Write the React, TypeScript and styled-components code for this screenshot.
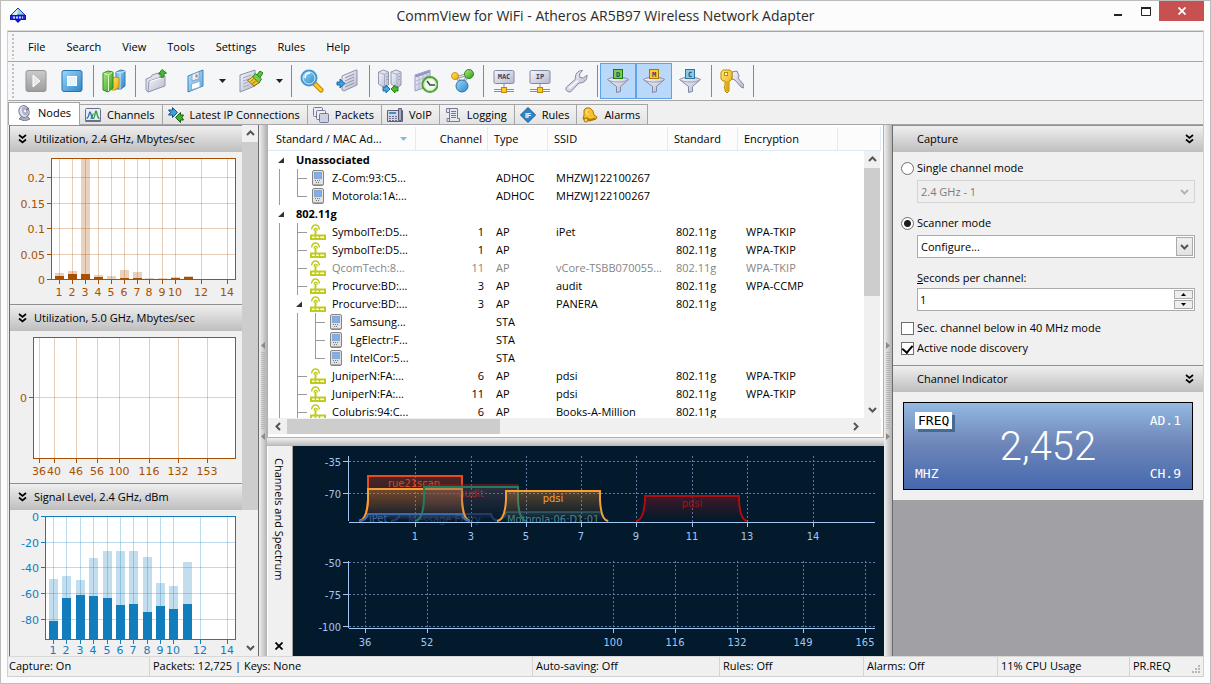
import React from "react";
import styled, { createGlobalStyle, css } from "styled-components";

const UI = `"Open Sans", "Noto Sans", sans-serif`;
const CHART = `"DejaVu Sans", sans-serif`;
const SPECTRUM = `"DejaVu Sans Condensed", "DejaVu Sans", sans-serif`;

const GlobalStyle = createGlobalStyle`
  * { box-sizing: border-box; }
  body { margin: 0; font: 11px/18px ${UI}; color: #000; }
  button, input, select { font: inherit; color: inherit; margin: 0; }
  button { border: 0; padding: 0; background: none; }
  svg { display: block; flex: none; }
`;

/* ---------- window frame ---------- */

const Window = styled.div`
  display: flex;
  flex-direction: column;
  height: 100vh;
  min-height: 640px;
  border: 1px solid #bdbdbd;
  background: #fcfcfc;
  padding: 0 6px 6px;
`;
const TitleBar = styled.header`
  display: grid;
  grid-template-columns: 120px 1fr 120px;
  height: 29px;
`;
const AppLogo = styled.div`
  padding: 6px 0 0 3px;
`;
const Title = styled.h1`
  margin: 0;
  font-size: 14px;
  font-weight: 400;
  line-height: 30px;
  text-align: center;
  color: #2b2b2b;
  white-space: nowrap;
`;
const WindowButtons = styled.div`
  display: flex;
  justify-content: flex-end;
  align-items: flex-start;
`;
const WindowButton = styled.button<{ $close?: boolean }>`
  display: grid;
  place-items: center;
  width: ${(p) => (p.$close ? 45 : 27)}px;
  height: 20px;
  background: ${(p) => (p.$close ? "#c75050" : "transparent")};
`;
const Client = styled.div`
  flex: 1;
  min-height: 0;
  display: flex;
  flex-direction: column;
  border: 1px solid #d0d0d0;
  border-top-color: #d9d9d9;
  background: #f0f0f0;
`;

/* ---------- menu and toolbar ---------- */

const Bar = styled.div<{ $height: number }>`
  display: flex;
  align-items: center;
  height: ${(p) => p.$height}px;
  border-top: 1px solid #a5a7ab;
  background: #f5f6f8;
`;
const Grip = styled.span`
  width: 2px;
  height: calc(100% - 4px);
  margin: 0 4px;
  background: repeating-linear-gradient(#c0c0c4 0 2px, transparent 2px 4px);
`;
const Menu = styled.nav`
  display: flex;
  gap: 21px;
  padding-left: 10px;
`;
const MenuItem = styled.button``;
const ToolGroup = styled.div`
  display: flex;
  align-items: center;
`;
const ToolButton = styled.button<{ $on?: boolean; $wide?: boolean }>`
  display: grid;
  place-items: center;
  width: ${(p) => (p.$wide ? 40 : 36)}px;
  height: 36px;
  border: 1px solid transparent;
  ${(p) =>
    p.$on &&
    css`
      background: #b9d8fa;
      border-color: #5fa2e6;
    `}
`;
const DropButton = styled.button`
  display: grid;
  place-items: center;
  width: 17px;
  height: 36px;
`;
const ToolSeparator = styled.span`
  width: 1px;
  height: 32px;
  margin: 0 2px 0 3px;
  background: #87898c;
`;

/* ---------- tabs ---------- */

const Tabs = styled.div`
  display: flex;
  align-items: flex-end;
  height: 25px;
  border-top: 1px solid #a5a7ab;
  border-bottom: 1px solid #a5a5aa;
  background: #f0f0f0;
`;
const Tab = styled.button<{ $active?: boolean }>`
  display: flex;
  align-items: center;
  gap: 6px;
  height: 20px;
  padding: 0 7px 0 5px;
  border: 1px solid #a5a5a5;
  border-bottom: 0;
  margin-right: -1px;
  background: linear-gradient(#f3f3f3, #e3e3e3);
  white-space: nowrap;
  ${(p) =>
    p.$active &&
    css`
      height: 23px;
      padding: 0 8px 2px 7px;
      background: #fff;
      margin-bottom: -1px;
    `}
`;

/* ---------- work area ---------- */

const Work = styled.main`
  flex: 1;
  min-height: 0;
  display: flex;
`;
const LeftDock = styled.aside`
  flex: none;
  display: flex;
  width: 250px;
  margin-left: 1px;
  border: solid #6b6b6b;
  border-width: 0 1px;
`;
const DockPanels = styled.div`
  flex: 1;
  display: flex;
  flex-direction: column;
  overflow: hidden;
`;
const PanelHead = styled.h2<{ $right?: boolean }>`
  flex: none;
  display: flex;
  align-items: center;
  gap: 7px;
  height: 27px;
  margin: 0;
  padding: ${(p) => (p.$right ? "0 9px 0 24px" : "0 8px 0")};
  justify-content: ${(p) => (p.$right ? "space-between" : "flex-start")};
  border-top: 1px solid #909090;
  background: linear-gradient(#efefef, #bebebe);
  font-size: 11px;
  font-weight: 400;
`;
const Collapse = styled.button`
  display: block;
`;
const ScrollV = styled.div`
  flex: none;
  display: flex;
  flex-direction: column;
  align-items: center;
  width: 16px;
  background: #f0f0f0;
`;
const ScrollTrack = styled.div`
  flex: 1;
  width: 100%;
`;
const ScrollThumb = styled.div<{ $share: number }>`
  height: ${(p) => p.$share}%;
  background: #cdcdcd;
`;
const ScrollButton = styled.button`
  display: grid;
  place-items: center;
  width: 17px;
  height: 17px;
`;
const SplitterV = styled.div`
  flex: none;
  display: grid;
  place-items: center;
  width: 8px;
  background: linear-gradient(90deg, #f0f0f0, #b2b2b2);
`;
const SplitterH = styled.div`
  flex: none;
  height: 8px;
  background: linear-gradient(#f0f0f0, #b8b8b8);
`;
const Center = styled.section`
  flex: 1;
  min-width: 0;
  display: flex;
  flex-direction: column;
`;

/* ---------- node list ---------- */

const NodeList = styled.div`
  position: relative;
  flex: 1;
  min-height: 0;
  display: flex;
  flex-direction: column;
  padding: 2px 2px 3px 0;
  border: 1px solid #b0b0b6;
  border-width: 0 1px 1px;
  background: #fff;
`;
const TableView = styled.div`
  flex: 1;
  min-height: 0;
  overflow: hidden;
`;
const Table = styled.table`
  width: 100%;
  table-layout: fixed;
  border-collapse: separate;
  border-spacing: 0;
  white-space: nowrap;
`;
const Th = styled.th<{ $w?: number; $end?: boolean }>`
  width: ${(p) => (p.$w ? p.$w + "px" : "auto")};
  height: 24px;
  padding: 1px 5px 0 6px;
  border-right: 1px solid #e2eaf5;
  border-bottom: 1px solid #dfe8f6;
  background: #fcfcfd;
  font-weight: 400;
  text-align: ${(p) => (p.$end ? "right" : "left")};
`;
const ThTree = styled.span`
  display: flex;
  align-items: center;
  justify-content: space-between;
  padding: 0 3px 0 2px;
`;
const Td = styled.td<{ $end?: boolean }>`
  height: 18px;
  padding: 0 4px 0 8px;
  overflow: hidden;
  text-align: ${(p) => (p.$end ? "right" : "left")};
`;
const TreeTd = styled.td`
  height: 18px;
  padding: 0 0 0 6px;
`;
const TreeCell = styled.div<{ $bold?: boolean }>`
  display: flex;
  align-items: center;
  height: 18px;
  font-weight: ${(p) => (p.$bold ? 700 : 400)};
`;
const TreeText = styled.span<{ $root?: boolean }>`
  margin-left: ${(p) => (p.$root ? 4 : 6)}px;
`;
const Row = styled.tr<{ $dim?: boolean }>`
  color: ${(p) => (p.$dim ? "#858585" : "#000")};
`;
const ListScrollV = styled(ScrollV)`
  position: absolute;
  top: 26px;
  right: 3px;
  bottom: 19px;
`;
const ScrollH = styled.div`
  flex: none;
  display: flex;
  align-items: center;
  height: 16px;
  padding: 0 17px 0 2px;
  background: #f0f0f0;
`;
const ScrollHTrack = styled.div`
  flex: 1;
  height: 15px;
`;
const ScrollHThumb = styled.div`
  width: 38%;
  height: 100%;
  background: #cdcdcd;
`;

/* ---------- spectrum ---------- */

const SpectrumPane = styled.div`
  flex: none;
  display: flex;
  height: 210px;
  background: #021a2b;
`;
const SpectrumSide = styled.div`
  flex: none;
  display: flex;
  flex-direction: column;
  align-items: center;
  justify-content: space-between;
  width: 26px;
  padding: 12px 2px 6px 0;
  border-right: 1px solid #a0a0a0;
  border-left: 1px solid #fff;
  background: #f0f0f0;
`;
const SideTitle = styled.span`
  writing-mode: vertical-rl;
  line-height: 16px;
`;

/* ---------- capture panel ---------- */

const RightDock = styled.aside`
  flex: none;
  display: flex;
  flex-direction: column;
  width: 311px;
  border-left: 1px solid #6b6b6b;
  background: #a0a0a5;
`;
const CaptureForm = styled.form`
  flex: none;
  display: flex;
  flex-direction: column;
  padding: 6px 8px 7px;
  background: #f0f0f0;
`;
const Choice = styled.label`
  display: flex;
  align-items: center;
  gap: 3px;
  height: 20px;
`;
const Radio = styled.input`
  appearance: none;
  width: 13px;
  height: 13px;
  border: 1px solid #6e6e6e;
  border-radius: 50%;
  background: #fff;
  &:checked {
    background: radial-gradient(circle, #1e1e1e 0 3px, #fff 4px);
  }
`;
const Check = styled.input`
  appearance: none;
  display: grid;
  place-items: center;
  width: 13px;
  height: 13px;
  border: 1px solid #6e6e6e;
  background: #fff;
  &:checked::before {
    content: "";
    width: 5px;
    height: 8px;
    margin-bottom: 2px;
    border: solid #000;
    border-width: 0 2px 2px 0;
    transform: rotate(40deg);
  }
`;
const Field = styled.div`
  display: grid;
  margin: 2px 0 0 16px;
`;
const Select = styled.select`
  grid-area: 1 / 1;
  appearance: none;
  height: 23px;
  padding: 0 3px;
  border: 1px solid #ababab;
  border-radius: 0;
  background: #fff;
  &:disabled {
    border-color: #d4d4d4;
    background: #efefef;
    color: #7b7b7b;
    opacity: 1;
  }
`;
const SelectArrow = styled.span<{ $box?: boolean }>`
  grid-area: 1 / 1;
  justify-self: end;
  align-self: center;
  display: grid;
  place-items: center;
  width: 17px;
  height: 19px;
  margin-right: 2px;
  pointer-events: none;
  ${(p) =>
    p.$box &&
    css`
      border: 1px solid #ababab;
      background: linear-gradient(#f0f0f0, #e2e2e2);
    `}
`;
const FieldLabel = styled.label`
  margin: 11px 0 0 16px;
`;
const Spin = styled.div`
  display: flex;
  height: 23px;
  margin: 1px 0 7px 16px;
  padding: 1px;
  border: 1px solid #ababab;
  background: #fff;
`;
const SpinInput = styled.input`
  flex: 1;
  min-width: 0;
  border: 0;
  padding: 0 1px;
  background: none;
`;
const SpinButtons = styled.div`
  display: grid;
  grid-template-rows: 1fr 1fr;
  gap: 1px;
  width: 19px;
`;
const SpinButton = styled.button`
  display: grid;
  place-items: center;
  border: 1px solid #ababab;
  background: #eee;
`;
const Gap = styled.div`
  height: 10px;
`;
const IndicatorWrap = styled.div`
  flex: none;
  padding: 10px;
  background: #f0f0f0;
`;
const Indicator = styled.div`
  display: grid;
  grid-template-columns: 60px 1fr 60px;
  height: 88px;
  padding: 9px 11px 7px;
  border: 1px solid #000;
  background: linear-gradient(#93b9e2, #7088ba 45%, #4568ad);
  font: 13px/17px "DejaVu Sans Mono", monospace;
  color: #fff;
`;
const IndicatorSide = styled.div<{ $end?: boolean }>`
  display: flex;
  flex-direction: column;
  justify-content: space-between;
  align-items: ${(p) => (p.$end ? "flex-end" : "flex-start")};
`;
const FreqTag = styled.span`
  padding: 0 3px;
  background: #fff;
  color: #000;
  box-shadow: 3px 3px 0 #436b94;
`;
const Frequency = styled.output`
  align-self: center;
  text-align: center;
  font: 300 40px/44px Roboto, sans-serif;
`;

/* ---------- status bar ---------- */

const StatusBar = styled.footer`
  flex: none;
  display: grid;
  grid-template-columns: 141px 1fr 187px 144px 134px 132px 74px;
  height: 20px;
  border-top: 1px solid #d8d8d8;
`;
const StatusItem = styled.span`
  display: flex;
  justify-content: space-between;
  padding: 0 2px 0 3px;
  border-left: 1px solid #d4d4d4;
  white-space: nowrap;
  &:first-child {
    border-left: 0;
    padding-left: 1px;
  }
`;

/* ---------- toolbar pictures ---------- */

const Svg24 = ({ children }: { children: React.ReactNode }) => (
  <svg width="24" height="24" viewBox="0 0 24 24" fill="none" aria-hidden>
    <defs>
      <linearGradient id="steel" x1="0" y1="0" x2="1" y2="1">
        <stop offset="0" stopColor="#f6f7fb" />
        <stop offset="1" stopColor="#b4b7cc" />
      </linearGradient>
      <linearGradient id="azure" x1="0" y1="0" x2="1" y2="1">
        <stop offset="0" stopColor="#9bd9fb" />
        <stop offset="1" stopColor="#2c86c9" />
      </linearGradient>
      <linearGradient id="sky" x1="0" y1="0" x2="1" y2="1">
        <stop offset="0" stopColor="#b5e2fb" />
        <stop offset="1" stopColor="#5fa9e0" />
      </linearGradient>
      <linearGradient id="leaf" x1="0" y1="0" x2="1" y2="1">
        <stop offset="0" stopColor="#b4ec80" />
        <stop offset="1" stopColor="#2f9a1d" />
      </linearGradient>
      <linearGradient id="gold" x1="0" y1="0" x2="1" y2="1">
        <stop offset="0" stopColor="#ffe873" />
        <stop offset="1" stopColor="#eaa800" />
      </linearGradient>
      <linearGradient id="stone" x1="0" y1="0" x2="0" y2="1">
        <stop offset="0" stopColor="#cbcbcb" />
        <stop offset="1" stopColor="#9e9e9e" />
      </linearGradient>
    </defs>
    {children}
  </svg>
);

const PlayIcon = () => (
  <Svg24>
    <rect x="2" y="1.500" width="20" height="21" rx="2" fill="url(#stone)" stroke="#949494" />
    <path d="M9 6v12l7-6z" fill="#e8e8e8" stroke="#fff" />
  </Svg24>
);
const StopIcon = () => (
  <Svg24>
    <rect x="2" y="1.500" width="20" height="21" rx="2" fill="url(#azure)" stroke="#2771ac" />
    <rect x="7.500" y="7.500" width="9" height="9" fill="#e4f4fd" stroke="#fff" />
  </Svg24>
);
const BooksIcon = () => (
  <Svg24>
    <path d="M14 3l5-2 4 1v15l-4 3h-5z" fill="url(#azure)" stroke="#3a79ad" />
    <path d="M14 3l4 1 5-2M18 4v16" stroke="#cfeafb" />
    <path d="M10 9l3-1 4 1v9l-4 3h-3z" fill="url(#gold)" stroke="#c79512" />
    <path d="M1 4l5-2 5 1v16l-5 4-5-2z" fill="url(#leaf)" stroke="#2f8a1c" />
    <path d="M1.500 4l5 2 4-3M6.500 6v16" stroke="#dcf7c4" />
  </Svg24>
);
const OpenIcon = () => (
  <Svg24>
    <path d="M2 10l5-2 1-2 6-2 2 1v13L4 23l-2-2z" fill="#dfe1ea" stroke="#9296b0" />
    <path d="M4 23l1-11 16-5v10z" fill="url(#steel)" stroke="#9296b0" />
    <path d="M5.500 12.500l15-4.500" stroke="#fff" />
    <path d="M14.500 5L18 .5 22.500 4l-2.500.5V8l-3 .5V5z" fill="#4dbb2d" stroke="#23821a" />
  </Svg24>
);
const SaveIcon = () => (
  <Svg24>
    <path d="M6 7l15-6v16L6 23z" fill="url(#sky)" stroke="#3f83bb" />
    <path d="M10 5.500l7-2.800v7L10 12z" fill="#eef1f8" stroke="#8da6c4" />
    <path d="M14.500 5.500v3" stroke="#8289a6" strokeWidth="2" />
    <path d="M9.500 15l8.500-3v6l-8.500 3z" fill="#fdfdff" stroke="#7fb2dc" />
  </Svg24>
);
const BrushIcon = () => (
  <Svg24>
    <path d="M1 6l15-5v16L1 23z" fill="url(#steel)" stroke="#8e92ad" />
    <path d="M4 9l8-3M4 12l6-2M4 15l5-2M4 18l6-2" stroke="#a3a7bd" />
    <path d="M17 7l4-5 3 2-4 6z" fill="#5cc438" stroke="#23821a" />
    <path d="M13.500 8l3-3.500 6 5.500-2.500 4z" fill="#6ed047" stroke="#23821a" />
    <path d="M13.500 8l6.500 6-5 3-6.500-5.500z" fill="url(#gold)" stroke="#8d7410" />
    <path d="M11.500 12.500l3-2.500M13.500 14.500l3-2.500" stroke="#8d7410" />
  </Svg24>
);
const FindIcon = () => (
  <Svg24>
    <path d="M15 15l6 6" stroke="#b78410" strokeWidth="5" strokeLinecap="round" />
    <path d="M15 15l6 6" stroke="#ffc928" strokeWidth="3" strokeLinecap="round" />
    <circle cx="9" cy="9" r="7.500" fill="url(#azure)" stroke="#4b96c9" strokeWidth="2" />
    <circle cx="9" cy="9" r="6" stroke="#c7ecfd" />
    <path d="M5 9c0-3 2-5 5-5" stroke="#fff" strokeWidth="1.500" />
  </Svg24>
);
const GotoIcon = () => (
  <Svg24>
    <path d="M6 7l14-6h1v15L8 22l-2-1z" fill="url(#steel)" stroke="#8e92ad" />
    <path d="M9 9l9-4M9 12l9-4M9 15l9-4M9 18l9-4" stroke="#8f94ae" />
    <path d="M1 13h3v-3l5 4.500L4 19v-3H1z" fill="#3a9be0" stroke="#1c6aa8" />
  </Svg24>
);
const ServersIcon = () => (
  <Svg24>
    <path d="M0.500 3l5-2 5 2v13l-4 3-6-4z" fill="url(#steel)" stroke="#9296b0" />
    <path d="M13 3l5-2 5 2v13l-4 3-6-4z" fill="url(#steel)" stroke="#9296b0" />
    <path d="M1 3.500l5.500 2 4-2M6.500 5.500v13M13.500 3.500l5.500 2 4-2M19 5.500v13" stroke="#a6aac0" />
    <path d="M8 8l2-1M8 11l2-1M20 8l2-1M20 11l2-1" stroke="#9a9eb6" />
    <path d="M5 18h3v-2l4 4-4 4v-2H5z" fill="#44a6e6" stroke="#1c6aa8" />
    <path d="M20 18h-3v-2l-4 4 4 4v-2h3z" fill="#4dbb2d" stroke="#23821a" />
  </Svg24>
);
const SchedulerIcon = () => (
  <Svg24>
    <path d="M1 6l15-5v16L1 22z" fill="url(#steel)" stroke="#9a9dc4" />
    <path d="M1.500 7.500l14-5" stroke="#8f93c0" strokeWidth="2" />
    <path d="M5 8v12M9 6v13M13 5v12M2 12l13-5M2 16l13-5" stroke="#b3b6d2" />
    <circle cx="16" cy="15.500" r="7.500" fill="#f2fbef" stroke="#4ea13c" strokeWidth="2" />
    <circle cx="16" cy="15.500" r="6" stroke="#b9e3ac" />
    <path d="M13 12l3 4h5" stroke="#3c4a3c" strokeWidth="1.500" />
  </Svg24>
);
const TopologyIcon = () => (
  <Svg24>
    <path d="M6 7l6 9M18 6l-6 10M8 8l8-2" stroke="#9a9eb0" strokeWidth="3" />
    <path d="M6 7l6 9M18 6l-6 10M8 8l8-2" stroke="#e9ebf2" />
    <circle cx="5" cy="7" r="3.500" fill="url(#gold)" stroke="#c79512" />
    <circle cx="19" cy="5" r="4.500" fill="url(#leaf)" stroke="#2f8a1c" />
    <circle cx="12" cy="17" r="6" fill="url(#azure)" stroke="#2f72a8" />
  </Svg24>
);
const Label = styled.text`
  font: 700 7px "DejaVu Sans Mono", monospace;
  text-anchor: middle;
  fill: #3c4568;
`;
const NetTagIcon = ({ tag }: { tag: string }) => (
  <Svg24>
    <rect x="2" y="1.500" width="20" height="13" rx="1.500" fill="url(#steel)" stroke="#8488a4" />
    <Label x="12" y="10">{tag}</Label>
    <path d="M12 15v5M2 20.500h20M2 22.500h20" stroke="#8d8f9c" />
    <rect x="9.500" y="18.500" width="5" height="5" fill="#ffc91f" stroke="#b78410" />
  </Svg24>
);
const WrenchIcon = () => (
  <Svg24>
    <path
      d="M2.500 18L11.500 10c-.8-4.500 2-8.500 7-8.500L15.500 5l.5 3.500 3.500.5 3.500-3c.6 5-3.500 8.500-8 8L7 22.500c-3 1.500-6.500-1.500-4.500-4.500z"
      fill="url(#steel)"
      stroke="#8488a4"
    />
    <path d="M5 19.500l9-8" stroke="#fff" strokeWidth="1.500" />
  </Svg24>
);
const FunnelIcon = ({ tag, fill, edge }: { tag: string; fill: string; edge: string }) => (
  <Svg24>
    <path d="M1.500 10.500c4-3 17-3 21 0l-8 7v5l-4 1v-6z" fill="url(#steel)" stroke="#8488a4" />
    <path d="M3 11.500c5 2 13 2 18 0" stroke="#9da1b8" />
    <rect x="7.500" y=".5" width="9" height="9" fill={fill} stroke={edge} />
    <Label x="12" y="8">{tag}</Label>
  </Svg24>
);
const KeysIcon = () => (
  <Svg24>
    <path d="M12 3l5-1 2 5-1 2 6 7v3l-3-1-6-7-3-1z" fill="url(#steel)" stroke="#8488a4" />
    <path d="M1 3l2-2h7l2 2v7l-2 2H9v10l-2 2-2-2v-2l-1-2 1-1v-5H3l-2-2z" fill="url(#gold)" stroke="#b98c0c" />
    <rect x="4.500" y="3.500" width="3" height="3" fill="#fff" stroke="#b98c0c" />
    <path d="M7 12v10" stroke="#c79512" />
  </Svg24>
);
const DropArrow = () => (
  <svg width="7" height="4" viewBox="0 0 7 4" aria-hidden>
    <path d="M0 0h7L3.500 4z" fill="#222" />
  </svg>
);

/* ---------- tab pictures ---------- */

const Svg16 = ({ children }: { children: React.ReactNode }) => (
  <svg width="16" height="16" viewBox="0 0 16 16" fill="none" aria-hidden>
    {children}
  </svg>
);
const NodesIcon = () => (
  <Svg16>
    <path d="M3 14l3-3h5l3 3-5 2z" fill="#a9adc2" stroke="#7a7e99" />
    <ellipse cx="8" cy="6.500" rx="5" ry="6" transform="rotate(-20 8 6.500)" fill="#dfe1ec" stroke="#7a7e99" />
    <ellipse cx="9" cy="6" rx="3" ry="4.500" transform="rotate(-20 9 6)" fill="#aeb2c8" />
    <path d="M9 6l4-3" stroke="#50546c" />
    <circle cx="9" cy="6" r="1.200" fill="#f6f7fb" />
  </Svg16>
);
const ChannelsIcon = () => (
  <Svg16>
    <rect x=".5" y="1.500" width="15" height="13" rx="1" fill="#e6eef5" stroke="#6a6d8c" />
    <path d="M1.500 11.500C4 11.500 4 5 5 5s1.500 6.500 3 6.500" stroke="#2f66c0" strokeWidth="1.300" />
    <path d="M5.500 11.500C7 11.500 7.500 7 8.500 7M8 11.500C10 11.500 10 4 11 4s1 7.500 3.500 7.500" stroke="#2a9a3a" strokeWidth="1.300" />
    <path d="M.5 14h15" stroke="#6a6d8c" strokeWidth="2" />
  </Svg16>
);
const ConnectionsIcon = () => (
  <Svg16>
    <path d="M.5 3h4V.500l5 5-5 5V8h-4l2-2.500z" fill="#3e9fdf" stroke="#1d4f7d" />
    <path d="M15.500 8h-3V5.500l-5 5 5 5V13h3l-1.500-2.500z" fill="#3fb030" stroke="#1b6114" />
  </Svg16>
);
const PacketsIcon = () => (
  <Svg16>
    <rect x=".5" y=".5" width="9" height="9" rx="1" fill="#eceef5" stroke="#74789a" />
    <rect x="3.500" y="3.500" width="9" height="9" rx="1" fill="#eceef5" stroke="#74789a" />
    <rect x="6.500" y="6.500" width="9" height="9" rx="1" fill="#cdd0df" stroke="#74789a" />
  </Svg16>
);
const VoipIcon = () => (
  <Svg16>
    <path d="M.5 3.500h15v11H.5z" fill="#d6d8e2" stroke="#5c607c" />
    <path d="M2 5h7v2H2z" fill="#3d8fd0" />
    <path d="M2 9.500h8M2 11.500h8M2 13.500h8" stroke="#6c708c" strokeDasharray="2 1" />
    <path d="M11.500 1.500h3v12h-3z" fill="#a7aabb" stroke="#5c607c" />
  </Svg16>
);
const LoggingIcon = () => (
  <Svg16>
    <path d="M1.500 1.500h11v10h2v3h-10v-9h-3z" fill="#e6e8f0" stroke="#74789a" />
    <path d="M4.500 1.500v10M6 4.500h5M6 6.500h5M6 8.500h5M6 10.500h5M4 11.500H2v3h3" stroke="#74789a" />
  </Svg16>
);
const RulesText = styled.text`
  font: 700 7px "Liberation Sans", sans-serif;
  text-anchor: middle;
  fill: #fff;
`;
const RulesIcon = () => (
  <Svg16>
    <path d="M8 .5L15.500 8 8 15.500.5 8z" fill="#2a86cb" stroke="#165486" />
    <RulesText x="8" y="11">IF</RulesText>
  </Svg16>
);
const AlarmsIcon = () => (
  <Svg16>
    <path d="M2 3l2-2 4 0 3 3 1 4 3 2-1 2-4 1-5-2-4 1 1-4z" fill="#f6c12a" stroke="#a97808" />
    <path d="M4 3.500l3-1M4 6l3 2M4 4v3" stroke="#fdeb9c" />
    <path d="M1.500 11.500l6 2 6-2" stroke="#a97808" strokeWidth="2" />
    <circle cx="4" cy="13" r="2" fill="#f9d455" stroke="#a97808" />
  </Svg16>
);
const LogoIcon = () => (
  <Svg16>
    <path d="M8 1l7 7H1z" fill="#8fe0b0" stroke="#2a2fd0" />
    <path d="M8 2L2 8h5z" fill="#e5edff" />
    <rect x=".5" y="8.500" width="15" height="4" fill="#2027d8" stroke="#1015c0" />
    <path d="M3 10.500h10" stroke="#c8d4ff" strokeWidth="2" strokeDasharray="2 1" />
    <path d="M5 13h6l-3 3z" fill="#1015c0" />
  </Svg16>
);

/* ---------- tree pictures ---------- */

type Guide = "line" | "tee" | "elbow" | "open";
const GuideCell = ({ kind }: { kind: Guide }) => (
  <svg width="18" height="18" viewBox="0 0 18 18" shapeRendering={kind === "open" ? "auto" : "crispEdges"} aria-hidden>
    {kind === "open" && <path d="M4 12h6V6.500z" fill="#333" />}
    {(kind === "line" || kind === "tee") && <rect x="5" width="1" height="18" fill="#9a9a9a" />}
    {kind === "elbow" && <rect x="5" width="1" height="9" fill="#9a9a9a" />}
    {(kind === "tee" || kind === "elbow") && <rect x="5" y="9" width="10" height="1" fill="#9a9a9a" />}
  </svg>
);
const RouterIcon = () => (
  <Svg16>
    <g stroke="#bfcc1e">
      <path d="M1.500 5.500c1-6 7-6 8 0" strokeWidth="1.500" />
      <path d="M4 6.500c.6-3 3-3 3.500 0" strokeWidth="1.500" />
      <path d="M5.500 6v6" strokeWidth="2" />
      <rect x="1" y="11.500" width="14" height="3.500" strokeWidth="2" />
      <path d="M5.500 12v3M9.500 12v3" strokeWidth="1.500" />
    </g>
  </Svg16>
);
const StationIcon = () => (
  <Svg16>
    <rect x="2.500" y=".5" width="11" height="15" rx="1.500" fill="#e2e2e2" stroke="#858585" />
    <rect x="4.500" y="2.500" width="7" height="6" fill="#7db0ee" stroke="#8ba6c8" />
    <path d="M5 10.500h6M6 12.500h4" stroke="#777" strokeDasharray="1 1" />
    <path d="M3 14.500h10" stroke="#aaa" />
  </Svg16>
);
const Chevrons = () => (
  <svg width="9" height="10" viewBox="0 0 9 10" fill="none" stroke="#000" strokeWidth="1.700" aria-hidden>
    <path d="M1 1l3.500 3L8 1M1 5.500l3.500 3 3.500-3" />
  </svg>
);
const Arrow = ({ turn, color = "#555" }: { turn: number; color?: string }) => (
  <svg width="9" height="9" viewBox="0 0 9 9" fill="none" stroke={color} strokeWidth="2" aria-hidden>
    <path d="M1 6l3.500-3.500L8 6" transform={`rotate(${turn} 4.500 4.500)`} />
  </svg>
);
const SplitterHandle = ({ left }: { left?: boolean }) => (
  <svg width="6" height="98" viewBox="0 0 6 98" fill="#8a8a8a" aria-hidden>
    <path d={left ? "M5 0v7L1 3.500z" : "M1 0v7l4-3.500z"} />
    <path d={left ? "M5 91v7l-4-3.500z" : "M1 91v7l4-3.500z"} />
    <path d="M2 10v78M4 10v78" stroke="#999" strokeDasharray="1 1" />
  </svg>
);

/* ---------- bar charts ---------- */

type ChartBar = [x: number, light: number, dark: number];
type Mark = [pos: number, label: string, grid?: boolean];
type ChartSpec = {
  top: number;
  box: [number, number, number, number];
  color: string;
  xs: Mark[];
  ys: Mark[];
  bars: ChartBar[];
  labelY: number;
};
const ChartText = styled.text`
  font: 11px ${CHART};
`;
const ChartArea = styled.div<{ $grow?: boolean }>`
  flex: ${(p) => (p.$grow ? "1 1 0" : "none")};
  min-height: 0;
  overflow: hidden;
  background: #f0f0f0;
`;
const BarChart = ({ spec }: { spec: ChartSpec }) => {
  const [l, t, r, b] = spec.box;
  const c = spec.color;
  return (
    <svg width="232" height="152" viewBox={`10 ${spec.top} 232 152`} shapeRendering="crispEdges" role="img">
      <rect x={l} y={t} width={r - l + 1} height={b - t + 1} fill="#fff" />
      {spec.ys.map(([y, s]) => (
        <g key={y} fill={c}>
          {y !== t && y !== b && <rect x={l} y={y} width={r - l} height="1" opacity="0.280" />}
          <rect x={l - 4} y={y} width="4" height="1" />
          <ChartText x={l - 6} y={y + 5} textAnchor="end">{s}</ChartText>
        </g>
      ))}
      {spec.xs.map(([x, s, grid = true]) => (
        <g key={x} fill={c}>
          {grid && <rect x={x} y={t} width="1" height={b - t} opacity="0.280" />}
          <rect x={x} y={b} width="1" height="5" />
          <ChartText x={x} y={spec.labelY} textAnchor="middle">{s}</ChartText>
        </g>
      ))}
      {spec.bars.map(([x, light, dark]) => (
        <g key={x} fill={c}>
          <rect x={x} y={light} width="9" height={b - light} opacity="0.260" />
          <rect x={x} y={dark} width="9" height={b - dark} />
        </g>
      ))}
      <g fill={c}>
        <rect x={l} y={t} width={r - l + 1} height="1" />
        <rect x={l} y={b} width={r - l + 1} height="1" />
        <rect x={l} y={t} width="1" height={b - t} />
        <rect x={r} y={t} width="1" height={b - t} />
      </g>
    </svg>
  );
};

const util24: ChartSpec = {
  top: 152,
  box: [51, 158, 235, 279],
  color: "#a85000",
  labelY: 296,
  ys: [[177, "0.2"], [203, "0.15"], [228, "0.1"], [254, "0.05"], [279, "0"]],
  xs: [[59, "1"], [72, "2"], [85, "3"], [98, "4"], [111, "5"], [124, "6"], [137, "7"], [149, "8"], [162, "9"], [175, "10"], [201, "12"], [227, "14"]],
  bars: [[55, 273, 276], [68, 271, 274], [81, 159, 274], [94, 275, 277], [107, 276, 279], [120, 270, 278], [133, 272, 278], [145, 278, 279], [158, 278, 279], [171, 277, 278], [184, 276, 277]],
};
const util50: ChartSpec = {
  top: 331,
  box: [33, 337, 235, 458],
  color: "#a85000",
  labelY: 475,
  ys: [[397, "0"]],
  xs: [[39, "36"], [54, "40"], [76, "46"], [97, "56"], [119, "100"], [149, "116"], [178, "132"], [207, "153"]],
  bars: [],
};
const signal24: ChartSpec = {
  top: 510,
  box: [45, 516, 235, 639],
  color: "#127dbd",
  labelY: 654,
  ys: [[516, "0"], [542, "-20"], [567, "-40"], [593, "-60"], [619, "-80"]],
  xs: [[53, "1"], [66, "2"], [80, "3"], [93, "4"], [107, "5"], [120, "6"], [133, "7"], [147, "8"], [160, "9"], [173, "10"], [200, "12"], [227, "14"]],
  bars: [[49, 579, 621], [62, 576, 598], [76, 580, 595], [89, 558, 596], [103, 551, 598], [116, 551, 605], [129, 551, 604], [143, 557, 612], [156, 583, 606], [169, 586, 609], [183, 562, 604]],
};

/* ---------- spectrum drawing ---------- */

const SpecText = styled.text`
  font: 11px ${SPECTRUM};
`;
type Hump = { l: number; r: number; top: number; color: string; fill?: string; w?: number };
const humps: Hump[] = [
  { l: 400, r: 491, top: 514, color: "#22386a", fill: "#1d3560" },
  { l: 506, r: 601, top: 512, color: "#2c6f80", fill: "#23506a", w: 1 },
  { l: 368, r: 462, top: 476, color: "#f04818", fill: "#c03a20" },
  { l: 368, r: 462, top: 489, color: "#f5a035", fill: "#d08030" },
  { l: 424, r: 518, top: 485, color: "#a81518", w: 1 },
  { l: 424, r: 518, top: 487, color: "#1f7d62", fill: "#70505a" },
  { l: 506, r: 600, top: 491, color: "#f5a035", fill: "#d08030" },
  { l: 368, r: 462, top: 514, color: "#3c68ae", fill: "#3a68a8" },
  { l: 645, r: 739, top: 496, color: "#b00c10", fill: "#a01525" },
];
const humpPath = (h: Hump) => {
  const knee = Math.max(h.top, 500);
  return `M${h.l - 9} 521Q${h.l - 1} 520 ${h.l} ${knee}V${h.top}H${h.r}V${knee}Q${h.r + 1} 520 ${h.r + 8} 521`;
};
const channels24 = [[415, "1"], [471, "3"], [526, "5"], [581, "7"], [636, "9"], [692, "11"], [747, "13"], [813, "14"]] as const;
const channels50 = [[365, "36"], [427, "52"], [613, "100"], [675, "116"], [737, "132"], [803, "149"], [865, "165"]] as const;

const Spectrum = () => (
  <svg width="590" height="210" viewBox="293 446 590 210" fill="none" role="img">
    <defs>
      {humps.map((h, i) => (
        <linearGradient key={i} id={`hump${i}`} gradientUnits="userSpaceOnUse" x1="0" x2="0" y1={h.top} y2="520">
          <stop offset="0" stopColor={h.fill ?? h.color} stopOpacity={h.fill ? 0.4 : 0} />
          <stop offset="0.700" stopColor={h.fill ?? h.color} stopOpacity={h.fill ? 0.12 : 0} />
          <stop offset="1" stopColor={h.fill ?? h.color} stopOpacity="0" />
        </linearGradient>
      ))}
    </defs>
    <g stroke="#5c7aa8" strokeDasharray="2 2" shapeRendering="crispEdges">
      {[461, 493, 562, 594, 626].map((y) => (
        <path key={y} d={`M349 ${y + 0.5}H875`} />
      ))}
      {channels24.map(([x]) => (
        <path key={x} d={`M${x + 0.5} 456V522`} />
      ))}
      {channels50.map(([x]) => (
        <path key={x} d={`M${x + 0.5} 561V628`} />
      ))}
    </g>
    <g fill="#3b69a6">
      <SpecText x="369" y="522">iPet</SpecText>
      <SpecText x="408" y="523" fill="#25406f">Message Entry</SpecText>
      <SpecText x="507" y="523" fill="#4c8c96">Motorola:06:D1:01</SpecText>
    </g>
    <g textAnchor="middle">
      <SpecText x="414" y="487" fill="#ee4a20">rue21scan</SpecText>
      <SpecText x="471" y="497" fill="#b01c22">audit</SpecText>
    </g>
    {humps.map((h, i) => (
      <path key={i} d={humpPath(h)} fill={`url(#hump${i})`} stroke={h.color} strokeWidth={h.w ?? 2} />
    ))}
    <g textAnchor="middle">
      <SpecText x="553" y="502" fill="#f5a035">pdsi</SpecText>
      <SpecText x="692" y="507" fill="#a80f18">pdsi</SpecText>
    </g>
    <g fill="#a4c6f2" shapeRendering="crispEdges">
      <rect x="348" y="456" width="1" height="65" />
      <rect x="349" y="522" width="526" height="1" />
      <rect x="348" y="561" width="1" height="67" />
      <rect x="349" y="628" width="526" height="1" />
      {([[461, "-35"], [493, "-70"], [562, "-50"], [594, "-75"], [626, "-100"]] as const).map(([y, s]) => (
        <g key={y}>
          <rect x="343" y={y} width="5" height="1" />
          <SpecText x="341" y={y + 5} textAnchor="end">{s}</SpecText>
        </g>
      ))}
      {channels24.map(([x, s]) => (
        <g key={x}>
          <rect x={x} y="522" width="1" height="5" />
          <SpecText x={x} y="540" textAnchor="middle">{s}</SpecText>
        </g>
      ))}
      {channels50.map(([x, s]) => (
        <g key={x}>
          <rect x={x} y="628" width="1" height="5" />
          <SpecText x={x} y="646" textAnchor="middle">{s}</SpecText>
        </g>
      ))}
    </g>
  </svg>
);

/* ---------- data ---------- */

type NodeRow = {
  name: string;
  guides: Guide[];
  icon?: "ap" | "sta";
  cells?: [channel: string, type: string, ssid: string, standard: string, encryption: string];
  dim?: boolean;
};
const rows: NodeRow[] = [
  { name: "Unassociated", guides: ["open"] },
  { name: "Z-Com:93:C5...", guides: ["line", "tee"], icon: "sta", cells: ["", "ADHOC", "MHZWJ122100267", "", ""] },
  { name: "Motorola:1A:...", guides: ["line", "elbow"], icon: "sta", cells: ["", "ADHOC", "MHZWJ122100267", "", ""] },
  { name: "802.11g", guides: ["open"] },
  { name: "SymbolTe:D5...", guides: ["line", "tee"], icon: "ap", cells: ["1", "AP", "iPet", "802.11g", "WPA-TKIP"] },
  { name: "SymbolTe:D5...", guides: ["line", "tee"], icon: "ap", cells: ["1", "AP", "", "802.11g", "WPA-TKIP"] },
  { name: "QcomTech:8...", guides: ["line", "tee"], icon: "ap", cells: ["11", "AP", "vCore-TSBB070055...", "802.11g", "WPA-TKIP"], dim: true },
  { name: "Procurve:BD:...", guides: ["line", "tee"], icon: "ap", cells: ["3", "AP", "audit", "802.11g", "WPA-CCMP"] },
  { name: "Procurve:BD:...", guides: ["line", "open"], icon: "ap", cells: ["3", "AP", "PANERA", "802.11g", ""] },
  { name: "Samsung...", guides: ["line", "line", "tee"], icon: "sta", cells: ["", "STA", "", "", ""] },
  { name: "LgElectr:F...", guides: ["line", "line", "tee"], icon: "sta", cells: ["", "STA", "", "", ""] },
  { name: "IntelCor:5...", guides: ["line", "line", "elbow"], icon: "sta", cells: ["", "STA", "", "", ""] },
  { name: "JuniperN:FA:...", guides: ["line", "tee"], icon: "ap", cells: ["6", "AP", "pdsi", "802.11g", "WPA-TKIP"] },
  { name: "JuniperN:FA:...", guides: ["line", "tee"], icon: "ap", cells: ["11", "AP", "pdsi", "802.11g", "WPA-TKIP"] },
  { name: "Colubris:94:C...", guides: ["line", "tee"], icon: "ap", cells: ["6", "AP", "Books-A-Million", "802.11g", ""] },
];

const tabs: [string, React.ReactNode][] = [
  ["Nodes", <NodesIcon />],
  ["Channels", <ChannelsIcon />],
  ["Latest IP Connections", <ConnectionsIcon />],
  ["Packets", <PacketsIcon />],
  ["VoIP", <VoipIcon />],
  ["Logging", <LoggingIcon />],
  ["Rules", <RulesIcon />],
  ["Alarms", <AlarmsIcon />],
];

const Tool = ({ name, on, wide, children }: { name: string; on?: boolean; wide?: boolean; children: React.ReactNode }) => (
  <ToolButton type="button" aria-label={name} $on={on} $wide={wide}>
    {children}
  </ToolButton>
);

export default function App() {
  return (
    <>
      <GlobalStyle />
      <Window>
        <TitleBar>
          <AppLogo><LogoIcon /></AppLogo>
          <Title>CommView for WiFi - Atheros AR5B97 Wireless Network Adapter</Title>
          <WindowButtons>
            <WindowButton type="button" aria-label="Minimize">
              <svg width="9" height="11" aria-hidden><rect y="8" width="8" height="2" fill="#222" /></svg>
            </WindowButton>
            <WindowButton type="button" aria-label="Maximize">
              <svg width="10" height="9" fill="none" aria-hidden>
                <path d="M.5 1v7.500h9V1M0 1h10" stroke="#222" />
                <rect width="10" height="2" fill="#222" />
              </svg>
            </WindowButton>
            <WindowButton type="button" aria-label="Close" $close>
              <svg width="8" height="8" stroke="#fff" strokeWidth="1.800" aria-hidden>
                <path d="M0.500 .5l7 7M7.500 .5l-7 7" />
              </svg>
            </WindowButton>
          </WindowButtons>
        </TitleBar>

        <Client>
          <Bar $height={30}>
            <Grip />
            <Menu>
              {["File", "Search", "View", "Tools", "Settings", "Rules", "Help"].map((m) => (
                <MenuItem type="button" key={m}>{m}</MenuItem>
              ))}
            </Menu>
          </Bar>
          <Bar $height={39}>
            <Grip />
            <ToolGroup>
              <Tool name="Start capture"><PlayIcon /></Tool>
              <Tool name="Stop capture"><StopIcon /></Tool>
              <ToolSeparator />
              <Tool name="Log viewer"><BooksIcon /></Tool>
              <ToolSeparator />
              <Tool name="Open"><OpenIcon /></Tool>
              <Tool name="Save" wide><SaveIcon /></Tool>
              <DropButton type="button" aria-label="Save options"><DropArrow /></DropButton>
              <Tool name="Clear" wide><BrushIcon /></Tool>
              <DropButton type="button" aria-label="Clear options"><DropArrow /></DropButton>
              <ToolSeparator />
              <Tool name="Find packet"><FindIcon /></Tool>
              <Tool name="Go to packet"><GotoIcon /></Tool>
              <ToolSeparator />
              <Tool name="Reconstruct sessions"><ServersIcon /></Tool>
              <Tool name="Scheduler"><SchedulerIcon /></Tool>
              <Tool name="Node reassociation"><TopologyIcon /></Tool>
              <ToolSeparator />
              <Tool name="MAC aliases"><NetTagIcon tag="MAC" /></Tool>
              <Tool name="IP aliases"><NetTagIcon tag="IP" /></Tool>
              <Tool name="Options"><WrenchIcon /></Tool>
              <ToolSeparator />
              <Tool name="Data packets" on><FunnelIcon tag="D" fill="#6fd04a" edge="#1d7a12" /></Tool>
              <Tool name="Management packets" on><FunnelIcon tag="M" fill="#ffc926" edge="#a97808" /></Tool>
              <Tool name="Control packets"><FunnelIcon tag="C" fill="#84c9ef" edge="#31749f" /></Tool>
              <ToolSeparator />
              <Tool name="WEP and WPA keys"><KeysIcon /></Tool>
              <ToolSeparator />
            </ToolGroup>
          </Bar>

          <Tabs role="tablist">
            {tabs.map(([name, icon], i) => (
              <Tab key={name} type="button" role="tab" aria-selected={i === 0} $active={i === 0}>
                {icon}
                {name}
              </Tab>
            ))}
          </Tabs>

          <Work>
            <LeftDock>
              <DockPanels>
                <PanelHead><Collapse type="button" aria-label="Collapse"><Chevrons /></Collapse>Utilization, 2.4 GHz, Mbytes/sec</PanelHead>
                <ChartArea><BarChart spec={util24} /></ChartArea>
                <PanelHead><Collapse type="button" aria-label="Collapse"><Chevrons /></Collapse>Utilization, 5.0 GHz, Mbytes/sec</PanelHead>
                <ChartArea><BarChart spec={util50} /></ChartArea>
                <PanelHead><Collapse type="button" aria-label="Collapse"><Chevrons /></Collapse>Signal Level, 2.4 GHz, dBm</PanelHead>
                <ChartArea $grow><BarChart spec={signal24} /></ChartArea>
              </DockPanels>
              <ScrollV>
                <ScrollButton type="button" aria-label="Scroll up"><Arrow turn={0} /></ScrollButton>
                <ScrollTrack><ScrollThumb $share={74} /></ScrollTrack>
                <ScrollButton type="button" aria-label="Scroll down"><Arrow turn={180} /></ScrollButton>
              </ScrollV>
            </LeftDock>
            <SplitterV><SplitterHandle left /></SplitterV>

            <Center>
              <NodeList>
                <TableView>
                  <Table>
                    <thead>
                      <tr>
                        <Th $w={148}>
                          <ThTree>
                            Standard / MAC Ad...
                            <svg width="7" height="4" aria-hidden><path d="M0 0h7L3.500 4z" fill="#74bfe2" /></svg>
                          </ThTree>
                        </Th>
                        <Th $w={72} $end>Channel</Th>
                        <Th $w={60}>Type</Th>
                        <Th $w={120}>SSID</Th>
                        <Th $w={70}>Standard</Th>
                        <Th $w={100}>Encryption</Th>
                        <Th aria-label="Empty" />
                      </tr>
                    </thead>
                    <tbody>
                      {rows.map((r, i) => (
                        <Row key={i} $dim={r.dim}>
                          <TreeTd colSpan={r.cells ? 1 : 7}>
                            <TreeCell $bold={!r.cells}>
                              {r.guides.map((g, k) => <GuideCell key={k} kind={g} />)}
                              {r.icon === "ap" && <RouterIcon />}
                              {r.icon === "sta" && <StationIcon />}
                              <TreeText $root={!r.cells}>{r.name}</TreeText>
                            </TreeCell>
                          </TreeTd>
                          {r.cells?.map((c, k) => <Td key={k} $end={k === 0}>{c}</Td>)}
                        </Row>
                      ))}
                    </tbody>
                  </Table>
                </TableView>
                <ListScrollV>
                  <ScrollButton type="button" aria-label="Scroll up"><Arrow turn={0} /></ScrollButton>
                  <ScrollTrack><ScrollThumb $share={55} /></ScrollTrack>
                  <ScrollButton type="button" aria-label="Scroll down"><Arrow turn={180} /></ScrollButton>
                </ListScrollV>
                <ScrollH>
                  <ScrollButton type="button" aria-label="Scroll left"><Arrow turn={-90} /></ScrollButton>
                  <ScrollHTrack><ScrollHThumb /></ScrollHTrack>
                  <ScrollButton type="button" aria-label="Scroll right"><Arrow turn={90} /></ScrollButton>
                </ScrollH>
              </NodeList>
              <SplitterH />
              <SpectrumPane>
                <SpectrumSide>
                  <SideTitle>Channels and Spectrum</SideTitle>
                  <button type="button" aria-label="Close spectrum">
                    <svg width="8" height="8" stroke="#000" strokeWidth="1.800" aria-hidden>
                      <path d="M0.500 .5l7 7M7.500 .5l-7 7" />
                    </svg>
                  </button>
                </SpectrumSide>
                <Spectrum />
              </SpectrumPane>
            </Center>

            <SplitterV><SplitterHandle /></SplitterV>
            <RightDock>
              <PanelHead $right>Capture<Collapse type="button" aria-label="Collapse"><Chevrons /></Collapse></PanelHead>
              <CaptureForm>
                <Choice><Radio type="radio" name="mode" /> Single channel mode</Choice>
                <Field>
                  <Select disabled aria-label="Channel"><option>2.4 GHz - 1</option></Select>
                  <SelectArrow><Arrow turn={180} color="#b5b5b5" /></SelectArrow>
                </Field>
                <Gap />
                <Choice><Radio type="radio" name="mode" defaultChecked /> Scanner mode</Choice>
                <Field>
                  <Select aria-label="Scanner"><option>Configure...</option></Select>
                  <SelectArrow $box><Arrow turn={180} /></SelectArrow>
                </Field>
                <FieldLabel htmlFor="seconds"><u>S</u>econds per channel:</FieldLabel>
                <Spin>
                  <SpinInput id="seconds" type="text" defaultValue="1" />
                  <SpinButtons>
                    <SpinButton type="button" aria-label="More"><svg width="5" height="3" aria-hidden><path d="M0 3h5L2.500 0z" /></svg></SpinButton>
                    <SpinButton type="button" aria-label="Less"><svg width="5" height="3" aria-hidden><path d="M0 0h5L2.500 3z" /></svg></SpinButton>
                  </SpinButtons>
                </Spin>
                <Choice><Check type="checkbox" /> Sec. channel below in 40 MHz mode</Choice>
                <Choice><Check type="checkbox" defaultChecked /> Active node discovery</Choice>
              </CaptureForm>
              <PanelHead $right>Channel Indicator<Collapse type="button" aria-label="Collapse"><Chevrons /></Collapse></PanelHead>
              <IndicatorWrap>
                <Indicator>
                  <IndicatorSide><FreqTag>FREQ</FreqTag><span>MHZ</span></IndicatorSide>
                  <Frequency>2,452</Frequency>
                  <IndicatorSide $end><span>AD.1</span><span>CH.9</span></IndicatorSide>
                </Indicator>
              </IndicatorWrap>
            </RightDock>
          </Work>

          <StatusBar>
            <StatusItem>Capture: On</StatusItem>
            <StatusItem>Packets: 12,725 | Keys: None</StatusItem>
            <StatusItem>Auto-saving: Off</StatusItem>
            <StatusItem>Rules: Off</StatusItem>
            <StatusItem>Alarms: Off</StatusItem>
            <StatusItem>11% CPU Usage</StatusItem>
            <StatusItem>
              PR.REQ
              <svg width="10" height="18" fill="#b8b8b8" aria-hidden>
                <path d="M7 8h2v2H7zM4 11h2v2H4zM7 11h2v2H7zM1 14h2v2H1zM4 14h2v2H4zM7 14h2v2H7z" />
              </svg>
            </StatusItem>
          </StatusBar>
        </Client>
      </Window>
    </>
  );
}
